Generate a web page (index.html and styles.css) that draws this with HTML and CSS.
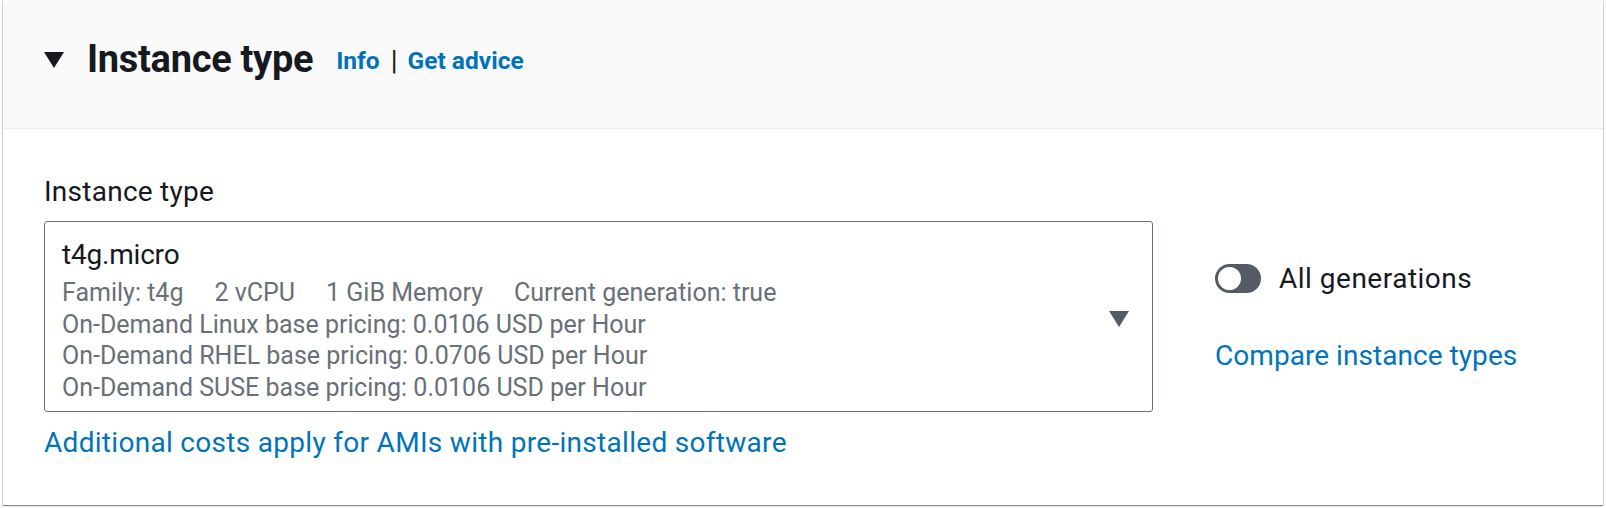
FILE: index.html
```html
<!DOCTYPE html>
<html lang="en">
<head>
<meta charset="utf-8">
<title>Instance type</title>
<link rel="stylesheet" href="styles.css">
</head>
<body>
<section class="container">
  <header class="header">
    <svg class="caret-down" width="20" height="16" viewBox="0 0 20 16" aria-hidden="true"><polygon points="0,0 20,0 10,16" fill="#16191f"/></svg>
    <h2 class="title">Instance type</h2>
    <span class="header-links"><a class="link strong" href="#">Info</a><span class="sep">|</span><a class="link strong" href="#">Get advice</a></span>
  </header>
  <div class="content">
    <div class="main-col">
      <div class="label">Instance type</div>
      <div class="select">
        <div class="select-text">
          <div class="option-name">t4g.micro</div>
          <div class="tags">
            <span>Family: t4g</span><span>2 vCPU</span><span>1 GiB Memory</span><span>Current generation: true</span>
          </div>
          <div class="desc">On-Demand Linux base pricing: 0.0106 USD per Hour</div>
          <div class="desc">On-Demand RHEL base pricing: 0.0706 USD per Hour</div>
          <div class="desc">On-Demand SUSE base pricing: 0.0106 USD per Hour</div>
        </div>
        <svg class="select-caret" width="20" height="16" viewBox="0 0 20 16" aria-hidden="true"><polygon points="0,0 20,0 10,16" fill="#545b64"/></svg>
      </div>
      <a class="link extra" href="#">Additional costs apply for AMIs with pre-installed software</a>
    </div>
    <div class="side-col">
      <div class="toggle-row">
        <span class="toggle"><span class="knob"></span></span>
        <span class="toggle-label">All generations</span>
      </div>
      <a class="link compare" href="#">Compare instance types</a>
    </div>
  </div>
</section>
</body>
</html>
```
FILE: styles.css
```css
* { box-sizing: border-box; }
html, body { margin: 0; padding: 0; background: #ffffff; }
body {
  font-family: Roboto, "Liberation Sans", Arial, sans-serif;
  color: #16191f;
  width: 1606px;
  height: 508px;
  overflow: hidden;
}
.container {
  margin-left: 3px;
  width: 1600px;
  height: 505px;
  background: #ffffff;
  box-shadow: 0 1px 1px 0 rgba(0, 28, 36, 0.3), 1px 1px 1px 0 rgba(0, 28, 36, 0.15), -1px 1px 1px 0 rgba(0, 28, 36, 0.15);
}
.header {
  height: 129px;
  background: #fafafa;
  border-bottom: 1px solid #eaeded;
  display: flex;
  align-items: center;
  padding: 0 0 11px 41px;
}
.caret-down { flex: none; margin-right: 23px; margin-top: 2px; }
.title {
  margin: 0;
  font-size: 38px;
  font-weight: 700;
  line-height: 46px;
  letter-spacing: -0.3px;
}
.header-links { margin-left: 23px; font-size: 24.5px; margin-top: 4px; display: flex; align-items: center; }
.sep { margin: 0 10px 0 11px; color: #16191f; font-weight: 400; font-size: 28px; }
.link { color: #0073bb; text-decoration: none; }
.strong { font-weight: 700; }
.content {
  display: flex;
  padding: 43px 0 0 41px;
  gap: 62px;
}
.main-col { width: 1109px; flex: none; display: flex; flex-direction: column; align-items: flex-start; }
.label { font-size: 28px; letter-spacing: 0.25px; line-height: 39px; margin-bottom: 10px; }
.select {
  width: 1109px;
  height: 191px;
  border: 1px solid #687078;
  border-radius: 3px;
  display: flex;
  align-items: flex-start;
  padding: 13px 23px 0 17px;
}
.select-text { flex: 1; }
.option-name { font-size: 28px; letter-spacing: -0.2px; line-height: 39px; margin-bottom: 3px; }
.tags { display: flex; gap: 31px; }
.tags, .desc { font-size: 25px; line-height: 31.7px; color: #687078; }
.select-caret { flex: none; align-self: center; margin-top: -8px; }
.extra { font-size: 28px; letter-spacing: 0.3px; line-height: 39px; margin-top: 11px; }
.side-col { display: flex; flex-direction: column; padding-top: 87px; }
.toggle-row { display: flex; align-items: center; height: 39px; }
.toggle {
  position: relative;
  width: 46px;
  height: 29px;
  border-radius: 15px;
  background: #545b64;
  margin-right: 18px;
  flex: none;
}
.knob {
  position: absolute;
  left: 3px;
  top: 3px;
  width: 23px;
  height: 23px;
  border-radius: 50%;
  background: #ffffff;
}
.toggle-label { font-size: 28px; letter-spacing: 0.5px; }
.compare { font-size: 28px; letter-spacing: 0.05px; line-height: 39px; margin-top: 38px; }
```
